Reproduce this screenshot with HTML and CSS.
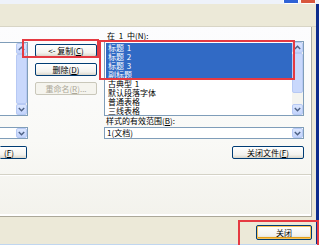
FILE: index.html
```html
<!DOCTYPE html>
<html>
<head>
<meta charset="utf-8">
<link rel="stylesheet" href="styles.css">
</head>
<body>
<div class="win">
  <div class="cap"><span class="cap-min"></span><span class="cap-close"></span></div>
  <div class="body">
    <div class="client">
      <div class="toolbar"></div>
      <div class="page">
        <div class="cols">
          <div class="col-left">
            <div class="list list-left">
              <div class="items"></div>
              <div class="sb">
                <div class="sbtn"><svg width="7" height="5" viewBox="0 0 7 5"><path d="M0.8 4 L3.5 1.2 L6.2 4" stroke="#4d6185" stroke-width="1.4" fill="none"/></svg></div>
                <div class="thumb thumb-left"></div>
                <div class="sbtn"><svg width="7" height="5" viewBox="0 0 7 5"><path d="M0.8 1 L3.5 3.8 L6.2 1" stroke="#4d6185" stroke-width="1.4" fill="none"/></svg></div>
              </div>
            </div>
            <div class="combo combo-left">
              <span class="combo-text"></span>
              <span class="drop"><svg width="7" height="5" viewBox="0 0 7 5"><path d="M0.8 1 L3.5 3.8 L6.2 1" stroke="#4d6185" stroke-width="1.4" fill="none"/></svg></span>
            </div>
            <div class="cut"><button class="btn btn-cut">(<u>F</u>)</button></div>
          </div>
          <div class="col-mid">
            <button class="btn btn-mid">&lt;- 复制(<u>C</u>)</button>
            <button class="btn btn-mid">删除(<u>D</u>)</button>
            <button class="btn btn-mid disabled">重命名(<u>R</u>)...</button>
          </div>
          <div class="col-right">
            <div class="label label-top">在 1 中(<u>N</u>):</div>
            <div class="list list-right">
              <div class="items">
                <div class="item sel">标题 1</div>
                <div class="item sel">标题 2</div>
                <div class="item sel">标题 3</div>
                <div class="item sel">副标题</div>
                <div class="item">古典型 1</div>
                <div class="item">默认段落字体</div>
                <div class="item">普通表格</div>
                <div class="item">三线表格</div>
              </div>
              <div class="sb">
                <div class="sbtn"><svg width="7" height="5" viewBox="0 0 7 5"><path d="M0.8 4 L3.5 1.2 L6.2 4" stroke="#4d6185" stroke-width="1.4" fill="none"/></svg></div>
                <div class="thumb thumb-right"></div>
                <div class="track"></div>
                <div class="sbtn"><svg width="7" height="5" viewBox="0 0 7 5"><path d="M0.8 1 L3.5 3.8 L6.2 1" stroke="#4d6185" stroke-width="1.4" fill="none"/></svg></div>
              </div>
            </div>
            <div class="label label-mid">样式的有效范围(<u>B</u>):</div>
            <div class="combo combo-right">
              <span class="combo-text">1(文档)</span>
              <span class="drop"><svg width="7" height="5" viewBox="0 0 7 5"><path d="M0.8 1 L3.5 3.8 L6.2 1" stroke="#4d6185" stroke-width="1.4" fill="none"/></svg></span>
            </div>
            <div class="btn-row"><button class="btn btn-close-file">关闭文件(<u>F</u>)</button></div>
          </div>
        </div>
        <div class="sep"></div>
      </div>
      <div class="footer"><button class="btn btn-default">关闭</button></div>
    </div>
    <div class="frame-r"></div>
  </div>
  <div class="bottom-line"></div>
  <div class="mark mark1"></div>
  <div class="mark mark2"></div>
  <div class="mark mark3"></div>
</div>
</body>
</html>
```

FILE: styles.css
```css
html, body {
  margin: 0;
  padding: 0;
}
body {
  width: 319px;
  height: 245px;
  overflow: hidden;
  background: #ece9d8;
  font-family: "Noto Sans CJK SC", "Noto Sans", sans-serif;
  font-size: 8px;
  color: #000;
}
.win {
  position: relative;
  width: 319px;
  height: 245px;
  display: flex;
  flex-direction: column;
  overflow: hidden;
}
.cap {
  height: 4px;
  flex: none;
  background: #eef2fa;
  display: flex;
  justify-content: flex-end;
  gap: 1px;
  padding-right: 3px;
}
.cap-min, .cap-close {
  width: 16px;
  height: 4px;
  box-sizing: border-box;
  border: 1px solid #fff;
  border-top: 0;
  border-radius: 0 0 2px 2px;
}
.cap-min { background: #2f62d6; }
.cap-close { background: #d8573d; }
.body {
  flex: 1;
  display: flex;
  min-height: 0;
}
.client {
  flex: 1;
  display: flex;
  flex-direction: column;
}
.frame-r {
  width: 3px;
  background: #0d2c8c;
}
.toolbar {
  height: 22px;
  flex: none;
  background: #ece9d8;
  border-bottom: 1px solid #d8d5c6;
}
.page {
  height: 190px;
  flex: none;
  box-sizing: border-box;
  margin-right: 4px;
  background: linear-gradient(#fcfcfe, #f9f9f6 60%, #f3f2ec);
  border-right: 1px solid #a9aea6;
  border-bottom: 1px solid #aca899;
  box-shadow: inset -1px 0 0 #fff, inset 0 -2px 0 #fff;
}
.cols {
  height: 132px;
  display: flex;
}
.col-left {
  width: 28px;
  display: flex;
  flex-direction: column;
  overflow: hidden;
}
.col-mid {
  width: 62px;
  margin-left: 7px;
  padding-top: 17px;
  display: flex;
  flex-direction: column;
  gap: 6px;
}
.col-right {
  width: 200px;
  margin-left: 7px;
  display: flex;
  flex-direction: column;
}
.label {
  height: 10px;
  line-height: 10px;
  padding-left: 3px;
  white-space: nowrap;
}
.label-top {
  margin-top: 3px;
  height: 11px;
  line-height: 11px;
  word-spacing: 2px;
}
.label-mid {
  padding-left: 2px;
}
.list {
  box-sizing: border-box;
  border: 1px solid #7f9db9;
  background: #fff;
  display: flex;
}
.list-left {
  margin-top: 15px;
  width: 30px;
  margin-left: -2px;
  height: 74px;
}
.list-right {
  height: 75px;
}
.items {
  flex: 1;
  padding-top: 1px;
  padding-left: 1px;
}
.item {
  height: 9px;
  line-height: 9px;
  padding-left: 2px;
  white-space: nowrap;
  word-spacing: 1px;
}
.item.sel {
  background: #316ac5;
  color: #fff;
}
.sb {
  width: 11px;
  display: flex;
  flex-direction: column;
  background: #f4f4f0;
}
.sbtn {
  height: 11px;
  flex: none;
  box-sizing: border-box;
  border: 1px solid #b7c9f4;
  border-radius: 2px;
  background: linear-gradient(#dbe6fe, #c2d3fc);
  display: flex;
  align-items: center;
  justify-content: center;
}
.thumb {
  box-sizing: border-box;
  border: 1px solid #b7c9f4;
  border-radius: 2px;
  background: #c9d8fc;
}
.thumb-left { flex: 1; }
.thumb-right { height: 40px; }
.track { flex: 1; }
.combo {
  box-sizing: border-box;
  height: 12px;
  border: 1px solid #7f9db9;
  background: #fff;
  display: flex;
  align-items: stretch;
}
.combo-left {
  margin-top: 11px;
  width: 30px;
  margin-left: -2px;
}
.combo-right {
  margin-top: 1px;
}
.combo-text {
  flex: 1;
  line-height: 10px;
  padding-left: 2px;
  white-space: nowrap;
}
.drop {
  width: 11px;
  box-sizing: border-box;
  border: 1px solid #b7c9f4;
  border-radius: 2px;
  background: linear-gradient(#dbe6fe, #c2d3fc);
  display: flex;
  align-items: center;
  justify-content: center;
}
.btn {
  box-sizing: border-box;
  height: 13px;
  padding: 0;
  margin: 0;
  border: 1px solid #003c74;
  border-radius: 2px;
  background: linear-gradient(#ffffff, #f3f2ee 70%, #dcd7cb);
  font: inherit;
  color: #000;
  display: flex;
  align-items: center;
  justify-content: center;
  line-height: 1;
  white-space: nowrap;
}
.btn-mid {
  width: 62px;
}
.btn.disabled {
  border-color: #c9c7ba;
  color: #aca899;
  background: #f5f4ee;
}
.cut {
  margin-top: 7px;
  width: 27px;
  display: flex;
}
.btn-cut {
  width: 27px;
  justify-content: flex-start;
  padding-left: 3px;
  border-left-color: transparent;
  border-radius: 0 2px 2px 0;
}
.btn-row {
  margin-top: 7px;
  display: flex;
  justify-content: flex-end;
}
.btn-close-file {
  width: 72px;
}
.sep {
  margin-top: 15px;
  height: 1px;
  background: #d4d2c6;
  border-bottom: 1px solid #fff;
}
.footer {
  flex: 1;
  display: flex;
  justify-content: flex-end;
  padding: 8px 4px 0 0;
}
.btn-default {
  width: 56px;
  height: 15px;
  box-shadow: inset 0 0 0 1px #f9c35a, inset 0 -1px 0 1px #e5a01a;
}
.bottom-line {
  height: 1px;
  flex: none;
  background: #c0d6f0;
}
.mark {
  position: absolute;
  box-sizing: border-box;
  border: 2px solid #e53a42;
}
.mark1 { left: 22px; top: 39px; width: 77px; height: 19px; }
.mark2 { left: 99px; top: 40px; width: 196px; height: 40px; }
.mark3 { left: 238px; top: 220px; width: 81px; height: 30px; }
```
